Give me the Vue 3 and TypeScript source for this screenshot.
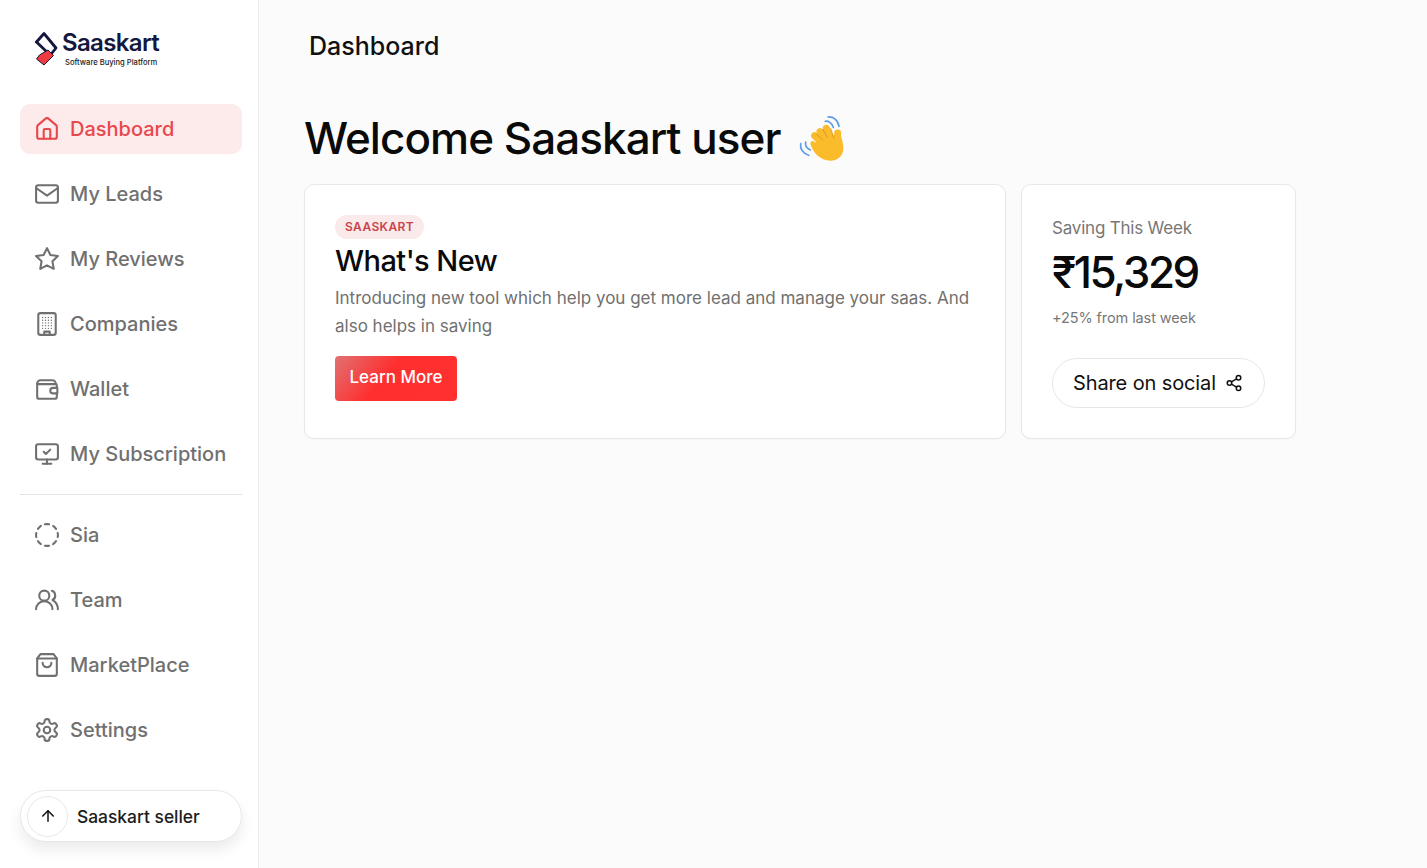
<script setup lang="ts">
interface NavItem {
  label: string;
  paths: string[];
  active?: boolean;
  dots?: boolean;
}

const circle = (cx: number, cy: number, r: number) =>
  `M${cx + r} ${cy}a${r} ${r} 0 1 1-${r * 2} 0 ${r} ${r} 0 0 1 ${r * 2} 0z`;

const topNav: NavItem[] = [
  {
    label: 'Dashboard',
    active: true,
    paths: [
      'M15 21v-8a1 1 0 0 0-1-1h-4a1 1 0 0 0-1 1v8',
      'M3 10a2 2 0 0 1 .709-1.528l7-5.999a2 2 0 0 1 2.582 0l7 5.999A2 2 0 0 1 21 10v9a2 2 0 0 1-2 2H5a2 2 0 0 1-2-2z',
    ],
  },
  {
    label: 'My Leads',
    paths: ['M4 4h16a2 2 0 0 1 2 2v12a2 2 0 0 1-2 2H4a2 2 0 0 1-2-2V6a2 2 0 0 1 2-2z', 'm2 6.5 10 7 10-7'],
  },
  {
    label: 'My Reviews',
    paths: ['M12 2l3.09 6.26L22 9.27l-5 4.87 1.18 6.88L12 17.77l-6.18 3.25L7 14.14 2 9.27l6.91-1.01L12 2z'],
  },
  {
    label: 'Companies',
    dots: true,
    paths: ['M6 2h12a2 2 0 0 1 2 2v16a2 2 0 0 1-2 2H6a2 2 0 0 1-2-2V4a2 2 0 0 1 2-2z', 'M9.5 22v-3h5v3'],
  },
  {
    label: 'Wallet',
    paths: [
      'M3 7v12a2 2 0 0 0 2 2h14a2 2 0 0 0 2-2v-3',
      'M3 7a3 3 0 0 1 3-3h11a3 3 0 0 1 3 3',
      'M3 7.5h17a1 1 0 0 1 1 1V11',
      'M21.5 11h-4a2.5 2.5 0 0 0 0 5h4z',
    ],
  },
  {
    label: 'My Subscription',
    paths: [
      'M4 3h16a2 2 0 0 1 2 2v10a2 2 0 0 1-2 2H4a2 2 0 0 1-2-2V5a2 2 0 0 1 2-2z',
      'M8 21h8',
      'M12 17v4',
      'm9 10 2 2 4-4',
    ],
  },
];

const bottomNav: NavItem[] = [
  {
    label: 'Sia',
    paths: [
      'M10.1 2.182a10 10 0 0 1 3.8 0',
      'M13.9 21.818a10 10 0 0 1-3.8 0',
      'M17.609 3.721a10 10 0 0 1 2.69 2.7',
      'M2.182 13.9a10 10 0 0 1 0-3.8',
      'M20.279 17.609a10 10 0 0 1-2.7 2.69',
      'M21.818 10.1a10 10 0 0 1 0 3.8',
      'M3.721 6.391a10 10 0 0 1 2.7-2.69',
      'M6.391 20.279a10 10 0 0 1-2.69-2.7',
    ],
  },
  {
    label: 'Team',
    paths: ['M17 20.5a7.5 7.5 0 0 0-15 0', circle(9.5, 8, 4.6), 'M16.5 3.6a4.6 4.6 0 0 1 .6 8.4c2.8 1.6 4.9 4.8 4.9 8.5'],
  },
  {
    label: 'MarketPlace',
    paths: [
      'M6 2h12l3 4v14a2 2 0 0 1-2 2H5a2 2 0 0 1-2-2V6z',
      'M3 6h18',
      'M16 10a4 4 0 0 1-8 0',
    ],
  },
  {
    label: 'Settings',
    paths: [
      'M12.22 2h-.44a2 2 0 0 0-2 2v.18a2 2 0 0 1-1 1.73l-.43.25a2 2 0 0 1-2 0l-.15-.08a2 2 0 0 0-2.73.73l-.22.38a2 2 0 0 0 .73 2.73l.15.1a2 2 0 0 1 1 1.72v.51a2 2 0 0 1-1 1.74l-.15.09a2 2 0 0 0-.73 2.73l.22.38a2 2 0 0 0 2.73.73l.15-.08a2 2 0 0 1 2 0l.43.25a2 2 0 0 1 1 1.73V20a2 2 0 0 0 2 2h.44a2 2 0 0 0 2-2v-.18a2 2 0 0 1 1-1.73l.43-.25a2 2 0 0 1 2 0l.15.08a2 2 0 0 0 2.73-.73l.22-.39a2 2 0 0 0-.73-2.73l-.15-.08a2 2 0 0 1-1-1.74v-.5a2 2 0 0 1 1-1.74l.15-.09a2 2 0 0 0 .73-2.73l-.22-.38a2 2 0 0 0-2.73-.73l-.15.08a2 2 0 0 1-2 0l-.43-.25a2 2 0 0 1-1-1.73V4a2 2 0 0 0-2-2z',
      circle(12, 12, 3),
    ],
  },
];

const navGroups = [topNav, bottomNav];

// window grid on the building icon
const buildingDots: { x: number; y: number }[] = [];
for (const y of [6, 8.5, 11, 13.5, 16]) {
  for (const x of [8, 10.7, 13.3, 16]) {
    buildingDots.push({ x, y });
  }
}
</script>

<template>
  <div class="layout">
    <aside class="sidebar">
      <div class="brand">
        <svg class="brand-mark" viewBox="34 30 25 38" aria-hidden="true">
          <path d="M36.5 42 44 33.5 56 48 44 63" fill="none" stroke="#14183e" stroke-width="2.8" stroke-linejoin="round" stroke-linecap="round" />
          <path d="M36.5 42 48 53" fill="none" stroke="#14183e" stroke-width="2.8" stroke-linecap="round" />
          <path d="M39.5 55 48 50l5.5 5.5L44 65l-7.5-6z" fill="#ef3b3f" stroke="#14183e" stroke-width="1" stroke-linejoin="round" />
        </svg>
        <div class="brand-text">
          <div class="brand-name">Saaskart</div>
          <div class="brand-tag">Software Buying Platform</div>
        </div>
      </div>

      <template v-for="(group, groupIndex) in navGroups" :key="groupIndex">
        <hr v-if="groupIndex > 0" class="divider" />
        <nav class="nav">
          <a v-for="item in group" :key="item.label" class="nav-item" :class="{ active: item.active }">
            <svg class="nav-icon" viewBox="1 1 22 22" aria-hidden="true">
              <path v-for="d in item.paths" :key="d" :d="d" />
              <template v-if="item.dots">
                <circle v-for="dot in buildingDots" :key="`${dot.x}-${dot.y}`" class="dot" :cx="dot.x" :cy="dot.y" r="0.65" />
              </template>
            </svg>
            <span>{{ item.label }}</span>
          </a>
        </nav>
      </template>

      <button class="seller">
        <span class="seller-icon">
          <svg viewBox="0 0 24 24" aria-hidden="true">
            <path d="M12 19V5" />
            <path d="m5 12 7-7 7 7" />
          </svg>
        </span>
        <span>Saaskart seller</span>
      </button>
    </aside>

    <main class="main">
      <div class="page-title">Dashboard</div>
      <h1 class="welcome">
        <span>Welcome Saaskart user</span>
        <svg class="wave" viewBox="0 0 195 165" aria-hidden="true">
          <g fill="none" stroke="#5c9ce6" stroke-width="5" stroke-linecap="round">
            <path d="M100 31c8-2 20 4 24 18" />
            <path d="M108 18c14-2 30 8 33 28" />
            <path d="M41 93c-2 8 2 18 14 24" />
            <path d="M26 98c-2 14 6 28 24 35" />
          </g>
          <g fill="none" stroke="#fbbc2c" stroke-width="21" stroke-linecap="round">
            <path d="M100 105 68 74" />
            <path d="M108 95 84 62" />
            <path d="M120 92 103 52" />
            <path d="M135 105 137 66" />
          </g>
          <path d="M70 96c-6-10-18-6-14 6 6 16 18 38 48 46 28 6 50-10 50-36 0-14-4-26-8-42l-70 10z" fill="#fbbc2c" />
          <g fill="none" stroke="#e0932a" stroke-width="3" stroke-linecap="round">
            <path d="M92 88 74 69" />
            <path d="M106 78 92 55" />
            <path d="M126 82 116 53" />
          </g>
        </svg>
      </h1>

      <div class="cards">
        <section class="card news">
          <span class="badge">SAASKART</span>
          <h2 class="news-title">What's New</h2>
          <p class="news-text">
            Introducing new tool which help you get more lead and manage your saas. And also helps in saving
          </p>
          <button class="learn">Learn More</button>
        </section>

        <section class="card saving">
          <div class="saving-label">Saving This Week</div>
          <div class="saving-value">₹15,329</div>
          <div class="saving-delta">+25% from last week</div>
          <button class="share">
            <span>Share on social</span>
            <svg viewBox="0 0 24 24" aria-hidden="true">
              <circle cx="18" cy="5" r="3" />
              <circle cx="6" cy="12" r="3" />
              <circle cx="18" cy="19" r="3" />
              <path d="m8.6 13.5 6.8 4" />
              <path d="m15.4 6.5-6.8 4" />
            </svg>
          </button>
        </section>
      </div>
    </main>
  </div>
</template>

<style>
html,
body {
  margin: 0;
  background: #fbfbfb;
}
</style>

<style scoped>
.layout {
  display: flex;
  min-height: 868px;
  font-family: Inter, "Liberation Sans", sans-serif;
  background: #fbfbfb;
}
.sidebar {
  width: 259px;
  flex-shrink: 0;
  box-sizing: border-box;
  padding: 30px 16px 26px 20px;
  display: flex;
  flex-direction: column;
  background: #fff;
  border-right: 1px solid #ececec;
}
.brand {
  display: flex;
  align-items: flex-start;
  gap: 3px;
  height: 74px;
  padding-left: 14px;
}
.brand-mark {
  width: 25px;
  height: 38px;
  flex-shrink: 0;
}
.brand-name {
  font-size: 24px;
  line-height: 26px;
  font-weight: 600;
  letter-spacing: -0.65px;
  color: #14183e;
}
.brand-tag {
  margin: 2px 0 0 3px;
  font-size: 7.6px;
  line-height: 10px;
  font-weight: 500;
  color: #222;
}
.nav {
  display: flex;
  flex-direction: column;
  gap: 15px;
}
.nav-item {
  height: 50px;
  display: flex;
  align-items: center;
  gap: 11px;
  padding-left: 15px;
  border-radius: 10px;
  font-size: 20px;
  font-weight: 500;
  color: #707070;
}
.nav-item.active {
  background: #fdeaea;
  color: #e8474c;
}
.nav-icon {
  width: 24px;
  height: 24px;
  flex-shrink: 0;
  fill: none;
  stroke: currentColor;
  stroke-width: 1.9;
  stroke-linecap: round;
  stroke-linejoin: round;
}
.nav-icon .dot {
  fill: currentColor;
  stroke: none;
}
.divider {
  width: 100%;
  margin: 15px 0;
  border: none;
  border-top: 1px solid #e3e3e3;
}
.seller {
  margin-top: auto;
  height: 52px;
  display: flex;
  align-items: center;
  gap: 9px;
  padding: 0 6px;
  border: 1px solid #e8e8e8;
  border-radius: 26px;
  background: #fff;
  box-shadow: 0 8px 14px rgba(0, 0, 0, 0.08);
  font-family: inherit;
  font-size: 17.4px;
  font-weight: 500;
  color: #1c1c1c;
}
.seller-icon {
  width: 39px;
  height: 39px;
  display: grid;
  place-items: center;
  border: 1px solid #e8e8e8;
  border-radius: 50%;
}
.seller-icon svg {
  width: 18px;
  height: 18px;
  fill: none;
  stroke: #111;
  stroke-width: 2;
  stroke-linecap: round;
  stroke-linejoin: round;
}
.main {
  flex: 1;
  min-width: 0;
  padding: 30px 131px 0 45px;
}
.page-title {
  padding-left: 5px;
  font-size: 25px;
  line-height: 32px;
  font-weight: 500;
  color: #111;
}
.welcome {
  display: flex;
  align-items: center;
  height: 64px;
  margin: 44px 0 0;
  font-size: 44px;
  font-weight: 500;
  letter-spacing: -0.96px;
  color: #0a0a0a;
}
.wave {
  width: 65px;
  height: 55px;
  margin-left: 11px;
  flex-shrink: 0;
}
.cards {
  display: grid;
  grid-template-columns: 702px 275px;
  gap: 15px;
  margin-top: 14px;
}
.card {
  box-sizing: border-box;
  height: 255px;
  padding: 30px;
  background: #fff;
  border: 1px solid #e8e8e8;
  border-radius: 10px;
  box-shadow: 0 1px 2px rgba(0, 0, 0, 0.03);
}
.badge {
  display: inline-block;
  padding: 0 10px;
  height: 24px;
  line-height: 24px;
  border-radius: 12px;
  background: #fbeaea;
  color: #c9444a;
  font-size: 12px;
  font-weight: 600;
  letter-spacing: 0.4px;
}
.news-title {
  margin: 2px 0 0;
  font-size: 29px;
  line-height: 40px;
  font-weight: 500;
  letter-spacing: -0.55px;
  color: #0a0a0a;
}
.news-text {
  margin: 3px 0 0;
  font-size: 17px;
  line-height: 28px;
  color: #707070;
}
.learn {
  display: block;
  width: 122px;
  height: 45px;
  margin-top: 16px;
  padding: 0 0 4px;
  border: none;
  border-radius: 4px;
  background: linear-gradient(130deg, #e07272 0%, #ff2f2f 42%, #ff3030 100%);
  color: #fff;
  font-family: inherit;
  font-size: 17px;
  font-weight: 500;
}
.saving-label {
  margin-top: 1px;
  font-size: 17px;
  line-height: 24px;
  letter-spacing: -0.2px;
  color: #777;
}
.saving-value {
  margin-top: 4px;
  font-size: 44px;
  line-height: 56px;
  font-weight: 500;
  letter-spacing: -2.5px;
  color: #0a0a0a;
}
.saving-delta {
  margin-top: 8px;
  font-size: 14.5px;
  line-height: 20px;
  letter-spacing: -0.1px;
  color: #777;
}
.share {
  width: 213px;
  height: 50px;
  margin-top: 30px;
  display: flex;
  align-items: center;
  gap: 9px;
  padding: 0 0 0 20px;
  border: 1px solid #e6e6e6;
  border-radius: 25px;
  background: #fff;
  font-family: inherit;
  font-size: 20px;
  letter-spacing: -0.12px;
  color: #111;
}
.share svg {
  width: 18px;
  height: 18px;
  fill: none;
  stroke: #111;
  stroke-width: 2;
  stroke-linecap: round;
  stroke-linejoin: round;
}
</style>
